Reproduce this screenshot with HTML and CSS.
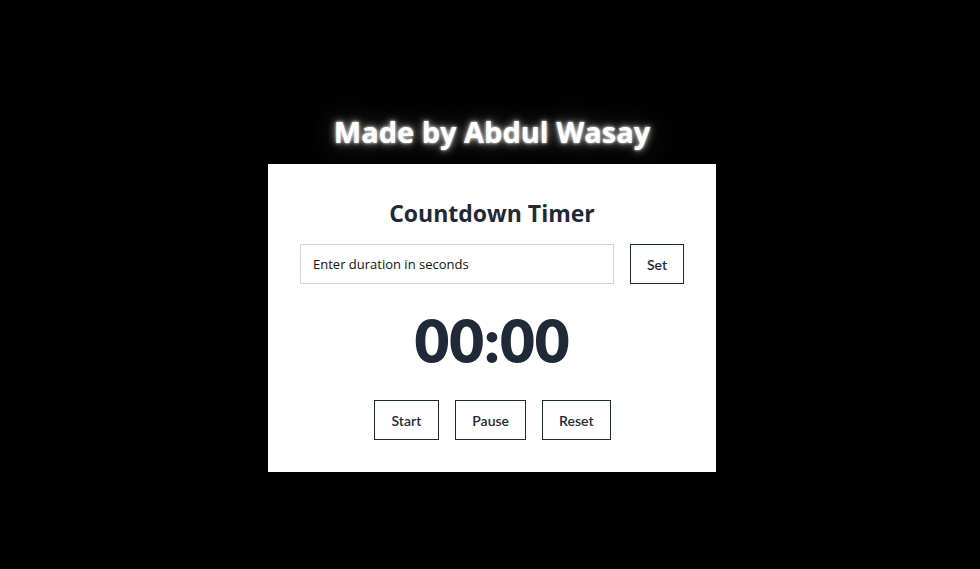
FILE: index.html
```html
<!DOCTYPE html>
<html lang="en">
<head>
<meta charset="utf-8">
<title>Countdown Timer</title>
<link rel="stylesheet" href="styles.css">
</head>
<body>
<main class="page">
  <h1 class="credit">Made by Abdul Wasay</h1>
  <section class="card">
    <h2 class="title">Countdown Timer</h2>
    <div class="setter">
      <input class="duration" type="text" placeholder="Enter duration in seconds">
      <button class="btn btn-set">Set</button>
    </div>
    <div class="display">00:00</div>
    <div class="controls">
      <button class="btn">Start</button>
      <button class="btn">Pause</button>
      <button class="btn">Reset</button>
    </div>
  </section>
</main>
</body>
</html>
```
FILE: styles.css
```css
html, body {
  margin: 0;
  padding: 0;
  background: #000;
  height: 100%;
}
.page {
  display: flex;
  flex-direction: column;
  align-items: center;
  padding-top: 114px;
  padding-left: 4px;
  font-family: "Open Sans", "Noto Sans", sans-serif;
}
.credit {
  margin: 0 0 14px;
  font-size: 29px;
  line-height: 36px;
  font-weight: 700;
  color: #fff;
  text-shadow: 0 0 3px #fff, 0 0 8px rgba(255,255,255,0.75), 0 0 30px rgba(255,255,255,0.3), 0 0 60px rgba(255,255,255,0.15);
}
.card {
  width: 384px;
  padding: 33px 32px 32px;
  background: #fff;
  color: #1f2937;
  display: flex;
  flex-direction: column;
  align-items: center;
}
.title {
  margin: 0 0 15px;
  font-size: 23px;
  line-height: 32px;
  font-weight: 700;
}
.setter {
  display: flex;
  gap: 16px;
  width: 100%;
  margin-bottom: 26px;
}
.duration {
  flex: 1;
  height: 40px;
  box-sizing: border-box;
  border: 1px solid #d1d5db;
  padding: 0 12px;
  font-family: "Open Sans", sans-serif;
  font-size: 13px;
  color: #111;
  outline: none;
}
.duration::placeholder {
  color: #111;
}
.btn {
  height: 40px;
  box-sizing: border-box;
  background: #fff;
  border: 1px solid #1f2937;
  border-radius: 0;
  padding: 0 16px;
  font-family: "Lato", sans-serif;
  font-size: 14px;
  font-weight: 600;
  color: #1f2937;
}
.btn-set {
  width: 54px;
  padding: 0;
}
.display {
  font-family: "Lato", sans-serif;
  font-weight: 800;
  font-size: 60px;
  line-height: 60px;
  margin-bottom: 30px;
}
.controls {
  display: flex;
  gap: 16px;
}
.controls .btn:first-child {
  padding: 0 17px;
}
```
